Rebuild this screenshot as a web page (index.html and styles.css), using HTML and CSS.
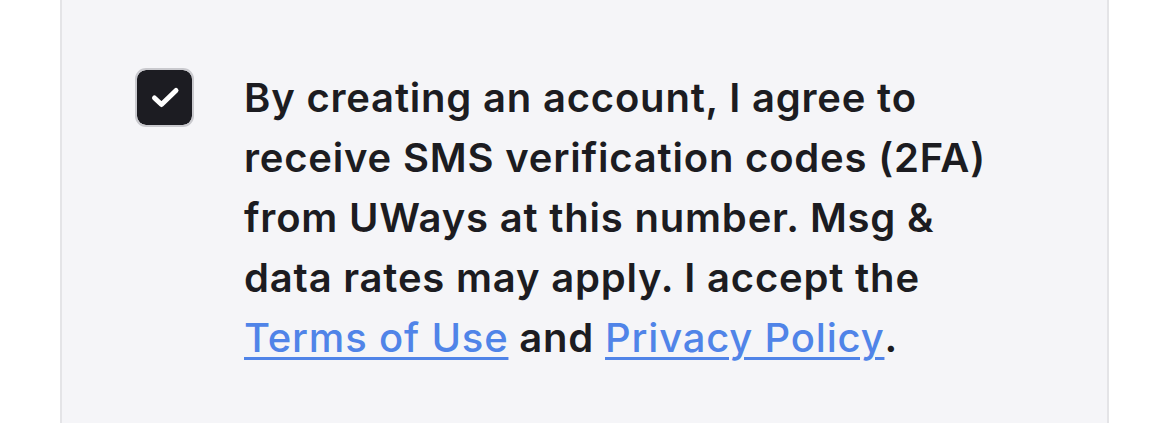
FILE: index.html
```html
<!DOCTYPE html>
<html lang="en">
<head>
    <meta charset="UTF-8">
    <meta name="viewport" content="width=device-width, initial-scale=1.0">
    <link rel="stylesheet" href="styles.css">
    <title>Consent</title>
</head>
<body>
    <div class="panel">
        <label class="consent">
            <span class="checkbox">
                <svg class="check" width="30" height="30" viewBox="0 0 30 30">
                    <path d="M4.5 15 L11.5 21.5 L26 7.5" fill="none" stroke="#fff" stroke-width="5" stroke-linecap="round" stroke-linejoin="round"/>
                </svg>
            </span>
            <span class="consent-text">
                By creating an account, I agree to receive SMS verification codes (2FA) from UWays at this number. Msg &amp; data rates may apply. I accept the
                <a href="#" class="link">Terms of Use</a> and <a href="#" class="link">Privacy Policy</a>.
            </span>
        </label>
    </div>
</body>
</html>
```

FILE: styles.css
```css
body {
    margin: 0;
    background-color: #fff;
    font-family: Inter, "Noto Sans", sans-serif;
}

.panel {
    margin-left: 60px;
    width: 1045px;
    height: 423px;
    background-color: #f5f5f8;
    border-left: 2px solid #e4e4e7;
    border-right: 2px solid #e4e4e7;
}

.consent {
    display: flex;
    align-items: flex-start;
    gap: 50px;
    padding: 68px 0 0 73px;
}

.checkbox {
    flex: none;
    display: flex;
    align-items: center;
    justify-content: center;
    width: 55px;
    height: 55px;
    border: 2px solid #c9c9ce;
    border-radius: 11px;
    background-color: #1c1c22;
    background-clip: padding-box;
}

.check {
    overflow: visible;
}

.consent-text {
    width: 760px;
    font-size: 40px;
    font-weight: 600;
    letter-spacing: 0.8px;
    line-height: 60px;
    color: #1c1c21;
}

.link {
    color: #5084e8;
    font-weight: 500;
    text-decoration: underline;
    text-decoration-thickness: 3px;
    text-underline-offset: 5px;
}
```
